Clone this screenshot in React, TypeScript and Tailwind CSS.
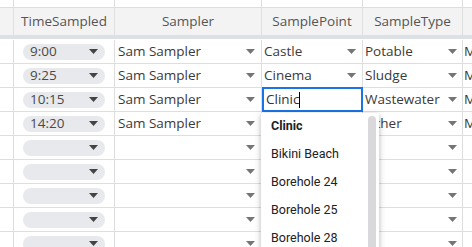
import React from "react";

const rows = [
  { t: "9:00", s: "Sam Sampler", p: "Castle", ty: "Potable" },
  { t: "9:25", s: "Sam Sampler", p: "Cinema", ty: "Sludge" },
  { t: "10:15", s: "Sam Sampler", p: "Clinic", ty: "Wastewater", edit: true },
  { t: "14:20", s: "Sam Sampler", p: "", ty: "Other" },
  { t: "", s: "", p: "", ty: "" },
  { t: "", s: "", p: "", ty: "" },
  { t: "", s: "", p: "", ty: "" },
  { t: "", s: "", p: "", ty: "" },
  { t: "", s: "", p: "", ty: "" },
];

function Caret() {
  return (
    <svg width="9" height="5" viewBox="0 0 9 5" className="shrink-0">
      <path d="M0 0 L9 0 L4.5 5 Z" fill="#757575" />
    </svg>
  );
}

function DarkCaret() {
  return (
    <svg width="9" height="5" viewBox="0 0 9 5" className="shrink-0">
      <path d="M0 0 L9 0 L4.5 5 Z" fill="#444" />
    </svg>
  );
}

const font = { fontFamily: '"Open Sans", sans-serif' };

export default function App() {
  return (
    <div className="relative w-[472px] h-[247px] overflow-hidden bg-white text-[13.5px]" style={font}>
      {/* top strip */}
      <div className="flex h-[8px] border-b border-[#dedede]">
        <div className="w-[14px] shrink-0 border-r border-[#dedede]" />
        <div className="w-[101px] shrink-0 border-r border-[#dedede]" />
        <div className="w-[147px] shrink-0 border-r border-[#dedede]" />
        <div className="w-[101px] shrink-0 border-r border-[#dedede]" />
        <div className="w-[100px] shrink-0 border-r border-[#dedede]" />
        <div className="flex-1" />
      </div>
      {/* header */}
      <div className="flex h-[27px] bg-[#f3f3f3] text-[#555] text-[13.5px]">
        <div className="w-[14px] shrink-0 border-r border-[#dedede]" />
        <div className="w-[101px] shrink-0 border-r border-[#dedede] flex items-center justify-center">TimeSampled</div>
        <div className="w-[147px] shrink-0 border-r border-[#dedede] flex items-center justify-center">Sampler</div>
        <div className="w-[101px] shrink-0 border-r border-[#dedede] flex items-center justify-center">SamplePoint</div>
        <div className="w-[100px] shrink-0 border-r border-[#dedede] flex items-center justify-center">SampleType</div>
        <div className="flex-1" />
      </div>
      <div className="h-[4px] bg-[#dde0e5]" />
      {/* rows */}
      <div className="pt-px">
        {rows.map((r, i) => (
          <div key={i} className="flex h-[24px] border-b border-[#dedede] text-[#3a3a3a]">
            <div className="w-[14px] shrink-0 border-r border-[#dedede]" />
            <div className="w-[101px] shrink-0 border-r border-[#dedede] flex items-center pl-[9px]">
              <div className="w-[82px] h-[16px] rounded-full bg-[#e8e9ec] flex items-center justify-between pl-[7px] pr-[7px] text-[#4a4a4a]">
                <span className="leading-none">{r.t}</span>
                <DarkCaret />
              </div>
            </div>
            <div className="w-[147px] shrink-0 border-r border-[#dedede] flex items-center justify-between pl-[3px] pr-[6px]">
              <span>{r.s}</span>
              <Caret />
            </div>
            {r.edit ? (
              <div className="w-[101px] shrink-0 border-2 border-[#1a73e8] -mt-px h-[25px] flex items-center pl-[2px] text-[#333]">
                <span>Clinic</span>
                <span className="w-px h-[16px] bg-black" />
              </div>
            ) : (
              <div className="w-[101px] shrink-0 border-r border-[#dedede] flex items-center justify-between pl-[2px] pr-[6px]">
                <span>{r.p}</span>
                <Caret />
              </div>
            )}
            <div className="w-[100px] shrink-0 border-r border-[#dedede] flex items-center justify-between pl-[2px] pr-[5px] overflow-hidden">
              <span className="whitespace-nowrap">{r.ty}</span>
              <Caret />
            </div>
            <div className="flex-1 flex items-center pl-[1px]">{i < 4 ? "M" : ""}</div>
          </div>
        ))}
      </div>
      {/* dropdown */}
      <div
        className="absolute left-[261px] top-[113px] w-[118px] h-[140px] bg-white shadow-[0_2px_6px_rgba(0,0,0,0.3)] text-[12.5px] text-[#202124]"
        style={{ fontFamily: "Roboto, sans-serif" }}
      >
        <div className="flex flex-col pl-[10px] -mt-px">
          <div className="h-[28px] flex items-center font-bold">Clinic</div>
          <div className="h-[28px] flex items-center">Bikini Beach</div>
          <div className="h-[28px] flex items-center">Borehole 24</div>
          <div className="h-[28px] flex items-center">Borehole 25</div>
          <div className="h-[28px] flex items-center">Borehole 28</div>
        </div>
        <div className="absolute right-[3px] top-[3px] w-[8px] h-[140px] rounded-t-full bg-[#d9d9dc]" />
      </div>
    </div>
  );
}
